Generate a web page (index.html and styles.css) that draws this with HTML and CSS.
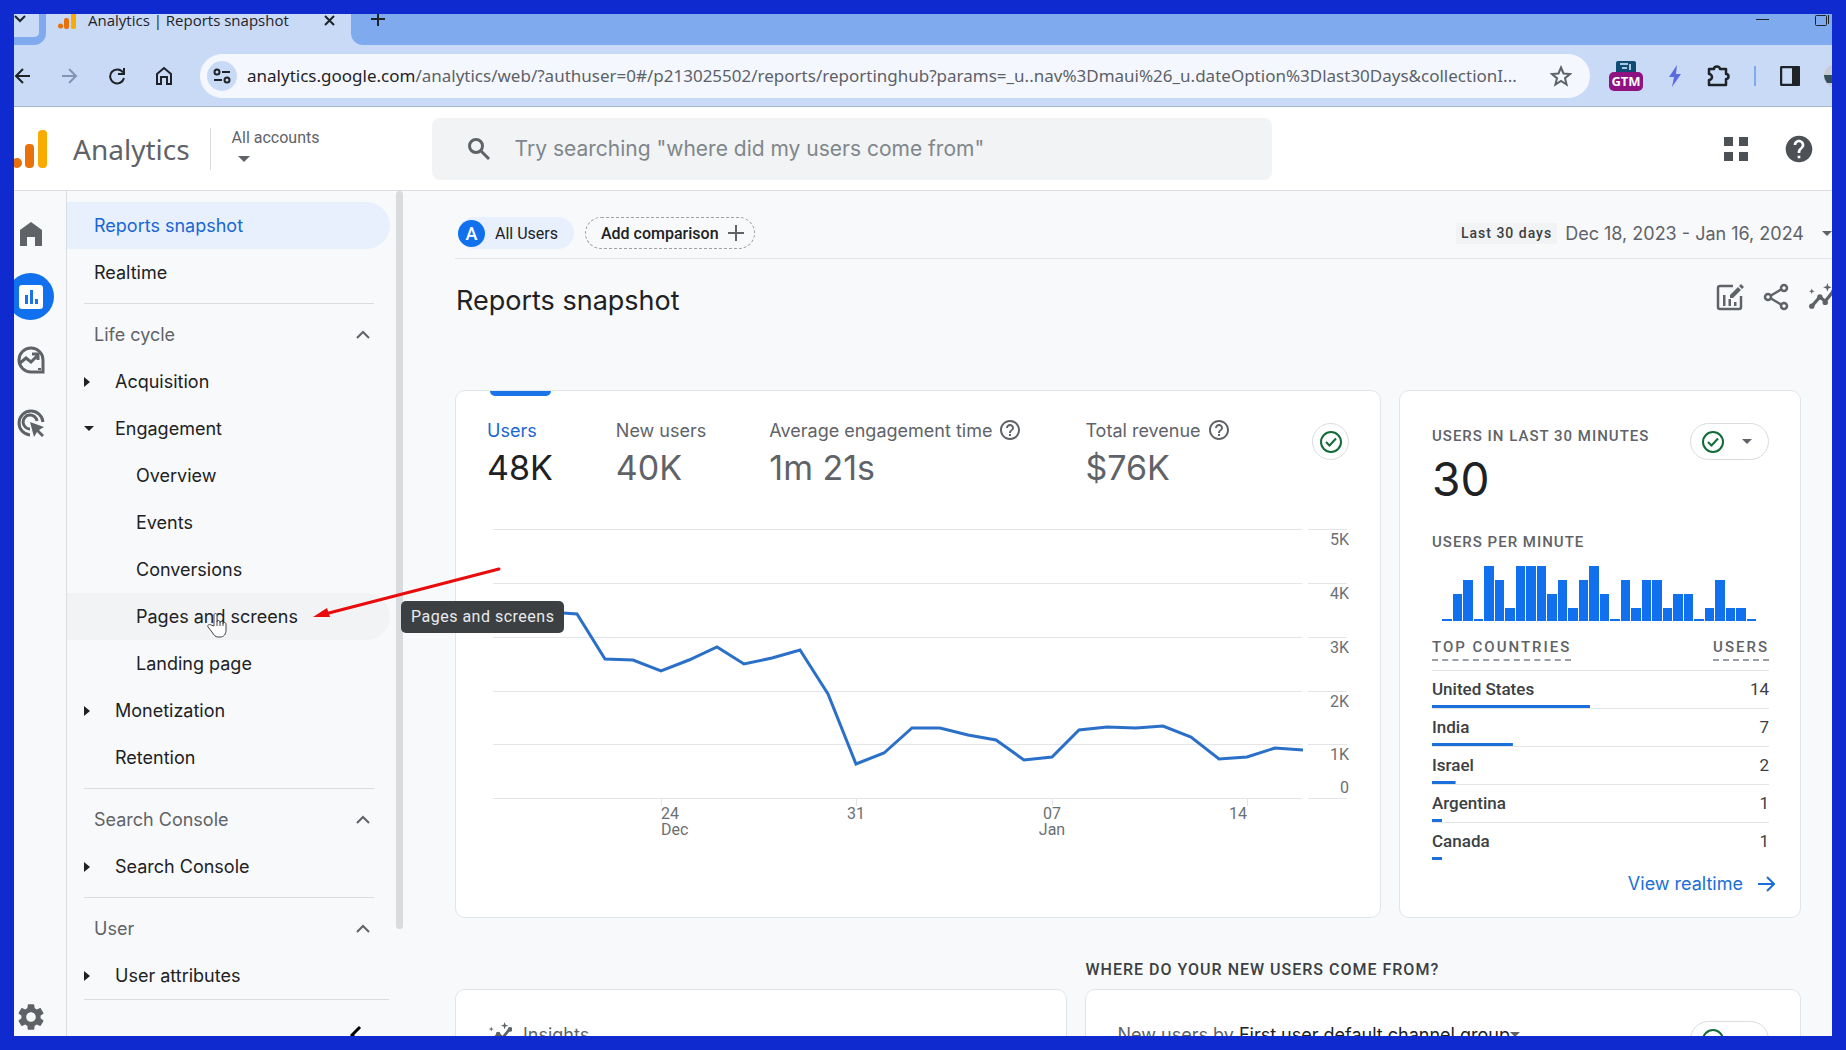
FILE: index.html
```html
<!DOCTYPE html>
<html lang="en">
<head>
  <meta charset="utf-8">
  <title>Analytics | Reports snapshot</title>
  <link rel="stylesheet" href="styles.css">
</head>
<body>
  <svg class="defs" width="0" height="0" aria-hidden="true">
    <symbol id="icon-help" viewBox="0 0 24 24"><path d="M11 18h2v-2h-2v2zm1-16C6.480 2 2 6.480 2 12s4.480 10 10 10 10-4.480 10-10S17.520 2 12 2zm0 18c-4.410 0-8-3.590-8-8s3.590-8 8-8 8 3.590 8 8-3.590 8-8 8zm0-14c-2.210 0-4 1.790-4 4h2c0-1.100.9-2 2-2s2 .9 2 2c0 2-3 1.750-3 5h2c0-2.250 3-2.500 3-5 0-2.210-1.790-4-4-4z"/></symbol>
    <symbol id="icon-check" viewBox="0 0 24 24"><circle cx="12" cy="12" r="10" fill="none" stroke="currentColor" stroke-width="2"/><path d="M7 12l3.500 3.500L17 8.500" fill="none" stroke="currentColor" stroke-width="2"/></symbol>
    <symbol id="icon-up" viewBox="0 0 14 9"><path d="M1 8l6-6 6 6" fill="none" stroke="currentColor" stroke-width="2"/></symbol>
    <symbol id="icon-spark" viewBox="0 0 26 26"><path d="M4 21l7-8 5 4 8-10" fill="none" stroke="currentColor" stroke-width="3"/><circle cx="3.500" cy="21.500" r="2.500"/><circle cx="11" cy="13" r="2.500"/><circle cx="16" cy="18" r="2.500"/><circle cx="24" cy="8" r="2.500"/><path d="M18 0l1 3 3 1-3 1-1 3-1-3-3-1 3-1zM3.500 5l.7 2 2 .7-2 .7-.7 2-.7-2-2-.7 2-.7z"/></symbol>
  </svg>

  <div class="tab-strip">
    <button class="tab-search" aria-label="Search tabs"><svg width="12" height="8" viewBox="0 0 12 8"><path d="M1 1l5 5 5-5" fill="none" stroke="currentColor" stroke-width="2"/></svg></button>
    <div class="tab">
      <svg width="18" height="18" viewBox="0 0 18 18"><circle cx="2.500" cy="15" r="2.500" fill="#e8710a"/><rect x="6" y="7" width="5" height="11" rx="2" fill="#e8710a"/><rect x="13" y="0" width="5" height="18" rx="2" fill="#f9ab00"/></svg>
      <span class="tab-title">Analytics | Reports snapshot</span>
      <button class="tab-close" aria-label="Close tab"><svg width="11" height="11" viewBox="0 0 11 11"><path d="M1 1l9 9M10 1l-9 9" stroke="currentColor" stroke-width="2"/></svg></button>
    </div>
    <button class="new-tab" aria-label="New tab"><svg width="14" height="14" viewBox="0 0 14 14"><path d="M7 0v14M0 7h14" stroke="currentColor" stroke-width="2"/></svg></button>
    <div class="window-buttons">
      <svg width="13" height="12" viewBox="0 0 13 12"><path d="M0 5.500h13" stroke="currentColor"/></svg>
      <svg width="16" height="14" viewBox="0 0 16 14"><rect x="1.500" y="1.500" width="11" height="10" rx="1" fill="none" stroke="currentColor"/><path d="M14.500 1v9" stroke="currentColor"/></svg>
    </div>
  </div>

  <div class="browser-bar">
    <button aria-label="Back"><svg width="18" height="18" viewBox="0 0 18 18"><path d="M16 9H2M9 2L2 9l7 7" fill="none" stroke="currentColor" stroke-width="2"/></svg></button>
    <button class="dim" aria-label="Forward"><svg width="18" height="18" viewBox="0 0 18 18"><path d="M1 9h14M8 2l7 7-7 7" fill="none" stroke="currentColor" stroke-width="2"/></svg></button>
    <button aria-label="Reload"><svg width="18" height="18" viewBox="0 0 18 18"><path d="M15 5.500A7 7 0 1 0 16 11" fill="none" stroke="currentColor" stroke-width="2"/><path d="M17 1v7h-7V6h5V1z"/></svg></button>
    <button aria-label="Home"><svg width="18" height="20" viewBox="0 0 18 20"><path d="M2 8l7-6 7 6v10h-4v-7H6v7H2z" fill="none" stroke="currentColor" stroke-width="2"/></svg></button>
    <div class="url-box">
      <span class="site-info"><svg width="18" height="16" viewBox="0 0 18 16" fill="none" stroke="currentColor" stroke-width="2"><circle cx="4" cy="4" r="2.500"/><path d="M9 4h8M1 12h8"/><circle cx="14" cy="12" r="2.500"/></svg></span>
      <span class="url"><span class="host">analytics.google.com</span>/analytics/web/?authuser=0#/p213025502/reports/reportinghub?params=_u..nav%3Dmaui%26_u.dateOption%3Dlast30Days&amp;collectionI...</span>
      <button aria-label="Bookmark"><svg width="22" height="22" viewBox="0 0 22 22"><path d="M11 2.500l2.500 6 6.500.5-5 4.200 1.600 6.300L11 16l-5.600 3.500L7 13.200 2 9l6.500-.5z" fill="none" stroke="currentColor" stroke-width="2"/></svg></button>
    </div>
    <div class="extensions">
      <svg class="gtm" width="36" height="32" viewBox="0 0 36 32"><rect x="8" y="1" width="20" height="14" rx="2" fill="#0f4c75"/><path d="M12 4h8M14 8h5M22 4v6" stroke="#a8c7e0" stroke-width="2"/><rect x="1" y="12" width="34" height="19" rx="5" fill="#8e1380"/><text x="18" y="26" text-anchor="middle">GTM</text></svg>
      <svg class="bolt" width="14" height="22" viewBox="0 0 14 22"><path d="M9 0L1 12h5l-2 10 9-13H8z" fill="#5b6be0"/></svg>
      <svg width="24" height="24" viewBox="0 0 24 24"><path d="M3 5h5a3 2.500 0 0 1 6 0h6v5a2.500 2.500 0 0 1 0 5v6H3v-5a3 3 0 0 0 0-6z" fill="none" stroke="currentColor" stroke-width="2.500" stroke-linejoin="round"/></svg>
      <span class="bar-divider"></span>
      <svg width="20" height="20" viewBox="0 0 20 20"><rect x="1" y="1" width="18" height="18" rx="1" fill="none" stroke="currentColor" stroke-width="2.500"/><rect x="12" y="1" width="7" height="18"/></svg>
      <svg class="avatar" width="24" height="24" viewBox="0 0 24 24"><circle cx="12" cy="12" r="12" fill="#c8ccd0"/><path d="M0 11h24a12 12 0 0 1-3 8H3a12 12 0 0 1-3-8z" fill="#35505c"/></svg>
    </div>
  </div>

  <header class="app-header">
    <svg class="logo" width="34" height="38" viewBox="0 0 34 38"><circle cx="3" cy="33" r="5" fill="#e8710a"/><rect x="11" y="14" width="9" height="24" rx="4" fill="#e8710a"/><rect x="24" y="0" width="9" height="38" rx="4" fill="#f9ab00"/></svg>
    <span class="product">Analytics</span>
    <button class="account">
      <span>All accounts</span>
      <span class="caret"></span>
    </button>
    <div class="search">
      <svg width="24" height="24" viewBox="0 0 24 24" fill="none" stroke="currentColor" stroke-width="3"><circle cx="9" cy="9" r="6.500"/><path d="M14 14l8 8"/></svg>
      <input type="text" aria-label="Search" placeholder="Try searching &quot;where did my users come from&quot;">
    </div>
    <div class="header-icons">
      <button aria-label="Apps"><svg width="24" height="24" viewBox="0 0 24 24"><path d="M0 0h9v9H0zM15 0h9v9h-9zM0 15h9v9H0zM15 15h9v9h-9z"/></svg></button>
      <button aria-label="Help"><svg width="32" height="32" viewBox="0 0 24 24"><path d="M12 2C6.480 2 2 6.480 2 12s4.480 10 10 10 10-4.480 10-10S17.520 2 12 2zm1 17h-2v-2h2v2zm2.070-7.750l-.9.920C13.450 12.900 13 13.500 13 15h-2v-.5c0-1.100.45-2.100 1.170-2.830l1.240-1.260c.37-.36.590-.86.590-1.410 0-1.100-.9-2-2-2s-2 .9-2 2H8c0-2.210 1.790-4 4-4s4 1.790 4 4c0 .88-.36 1.680-.93 2.250z"/></svg></button>
    </div>
  </header>

  <div class="app">
    <div class="rail">
      <a href="#" aria-label="Home"><svg width="22" height="24" viewBox="0 0 22 24"><path d="M0 24V8l11-8 11 8v16h-7v-9H7v9z"/></svg></a>
      <a href="#" class="current" aria-label="Reports"><svg width="24" height="24" viewBox="0 0 24 24"><rect width="24" height="24" rx="3" fill="#fff"/><path d="M6 10h3v9H6zM11 5h3v14h-3zM16 14h3v5h-3z" fill="#1a73e8"/></svg></a>
      <a href="#" aria-label="Explore"><svg width="28" height="28" viewBox="0 0 28 28" fill="none" stroke="currentColor" stroke-width="3"><path d="M26 26H14A12 12 0 1 1 26 14z"/><path d="M3 17l6-5 5 4 7-7M15 8h6v6"/><path d="M21 23h3" stroke-width="2"/></svg></a>
      <a href="#" aria-label="Advertising"><svg width="28" height="28" viewBox="0 0 28 28"><path d="M13 26A12 12 0 1 1 26 13M13 20A7 7 0 1 1 20 12" fill="none" stroke="currentColor" stroke-width="3"/><path d="M13 13l14 5-5 3 5 5-2 2-5-5-3 5z"/></svg></a>
      <a href="#" class="settings" aria-label="Admin"><svg width="32" height="32" viewBox="0 0 24 24"><path d="M19.140 12.940c.04-.3.060-.61.060-.94 0-.32-.02-.64-.07-.94l2.030-1.580c.18-.14.230-.41.120-.61l-1.920-3.320c-.12-.22-.37-.29-.59-.22l-2.390.96c-.5-.38-1.030-.7-1.620-.94l-.36-2.540c-.04-.24-.24-.41-.48-.41h-3.840c-.24 0-.43.170-.47.410l-.36 2.540c-.59.240-1.130.570-1.620.94l-2.390-.96c-.22-.08-.47 0-.59.220L2.740 8.870c-.12.210-.08.470.12.610l2.030 1.580c-.05.300-.09.630-.09.940s.02.640.07.940l-2.030 1.580c-.18.140-.23.410-.12.610l1.920 3.320c.12.220.37.290.59.220l2.390-.96c.5.380 1.030.7 1.620.94l.36 2.540c.05.240.24.410.48.410h3.840c.24 0 .44-.17.470-.41l.36-2.540c.59-.24 1.130-.56 1.620-.94l2.390.96c.22.080.47 0 .59-.22l1.920-3.320c.12-.22.070-.47-.12-.61l-2.010-1.580zM12 15.600c-1.980 0-3.600-1.620-3.600-3.600s1.620-3.600 3.600-3.600 3.600 1.620 3.600 3.600-1.620 3.600-3.600 3.600z"/></svg></a>
    </div>

    <nav class="side-nav">
      <div class="nav-scroll">
        <a href="#" class="nav-item selected">Reports snapshot</a>
        <a href="#" class="nav-item">Realtime</a>
        <hr>
        <button class="nav-item section">Life cycle <svg width="14" height="9"><use href="#icon-up"/></svg></button>
        <a href="#" class="nav-item parent">Acquisition</a>
        <a href="#" class="nav-item parent open">Engagement</a>
        <a href="#" class="nav-item child">Overview</a>
        <a href="#" class="nav-item child">Events</a>
        <a href="#" class="nav-item child">Conversions</a>
        <a href="#" class="nav-item child hovered">Pages and screens
          <svg class="hand" width="22" height="26" viewBox="0 0 22 26"><path d="M8 14V3c0-2 3-2 3 0v7c0-2 3-2 3 0v1c0-2 3-2 3 0v1c0-2 3-2 3 0v6c0 4-2 7-6 7h-2c-3 0-4-2-6-5l-4-5c-1-2 1-3 3-2z" fill="#fff" stroke="#444"/><path d="M11 10v4M14 11v3M17 12v2" stroke="#444"/></svg>
          <svg class="arrow" width="190" height="56" viewBox="0 0 190 56"><path d="M186 4L12 49" stroke="#e80c0c" stroke-width="3" stroke-linecap="round"/><path d="M0 52l14-9 3 9z" fill="#e80c0c"/></svg>
          <span class="tooltip">Pages and screens</span>
        </a>
        <a href="#" class="nav-item child">Landing page</a>
        <a href="#" class="nav-item parent">Monetization</a>
        <a href="#" class="nav-item leaf">Retention</a>
        <hr>
        <button class="nav-item section">Search Console <svg width="14" height="9"><use href="#icon-up"/></svg></button>
        <a href="#" class="nav-item parent">Search Console</a>
        <hr>
        <button class="nav-item section">User <svg width="14" height="9"><use href="#icon-up"/></svg></button>
        <a href="#" class="nav-item parent">User attributes</a>
      </div>
      <div class="nav-footer">
        <button aria-label="Collapse"><svg width="12" height="20" viewBox="0 0 12 20"><path d="M10 2L2 10l8 8" fill="none" stroke="#000" stroke-width="3"/></svg></button>
      </div>
      <span class="scroll-thumb"></span>
    </nav>

    <main>
      <div class="report-bar">
        <button class="chip"><span class="badge">A</span>All Users</button>
        <button class="add-chip">Add comparison <svg width="16" height="16" viewBox="0 0 16 16"><path d="M8 0v16M0 8h16" stroke="#5f6368" stroke-width="2"/></svg></button>
        <button class="date-range"><span class="range-name">Last 30 days</span><span>Dec 18, 2023 - Jan 16, 2024</span><span class="caret"></span></button>
      </div>

      <div class="title-row">
        <h1>Reports snapshot</h1>
        <div class="title-icons">
          <button aria-label="Customize report"><svg width="28" height="28" viewBox="0 0 28 28"><path d="M17 3H4a2 2 0 0 0-2 2v19a2 2 0 0 0 2 2h19a2 2 0 0 0 2-2V13" fill="none" stroke="currentColor" stroke-width="2.500"/><path d="M7 12h2.500v11H7zM12.500 16H15v7h-2.500zM18 19h2.500v4H18zM14 12l8-8 3 3-8 8h-3zM23 3l2-2 3 3-2 2z"/></svg></button>
          <button aria-label="Share"><svg width="26" height="28" viewBox="0 0 26 28" fill="none" stroke="currentColor" stroke-width="2.500"><circle cx="5" cy="14" r="3"/><circle cx="21" cy="5" r="3"/><circle cx="21" cy="23" r="3"/><path d="M8 12.500L18 6.500M8 15.500l10 6"/></svg></button>
          <button aria-label="Insights"><svg width="28" height="28"><use href="#icon-spark"/></svg></button>
        </div>
      </div>

      <div class="cards">
        <section class="card overview">
          <div class="metrics">
            <button class="metric active"><span>Users</span><strong>48K</strong></button>
            <button class="metric"><span>New users</span><strong>40K</strong></button>
            <button class="metric"><span>Average engagement time <svg width="24" height="24"><use href="#icon-help"/></svg></span><strong>1m 21s</strong></button>
            <button class="metric"><span>Total revenue <svg width="24" height="24"><use href="#icon-help"/></svg></span><strong>$76K</strong></button>
            <button class="status round" aria-label="Data quality"><svg width="24" height="24"><use href="#icon-check"/></svg></button>
          </div>
          <svg class="line-chart" viewBox="0 0 862 330">
            <g stroke="#e3e5e8">
              <path d="M6 9.500h809M821 9.500h39M6 63.500h809M821 63.500h39M6 117.500h809M821 117.500h39M6 171.500h809M821 171.500h39M6 224.500h809M821 224.500h39M6 278.500h809M821 278.500h39"/>
              <path d="M174.500 278v8M369.500 278v8M565.500 278v8M760.500 278v8"/>
            </g>
            <polyline points="6,96 34,94 62,92 90,94 118,139 146,140 174,151 202,140 230,127 257,144 285,138 313,130 341,174 369,244 397,233 425,208 453,208 481,215 509,220 537,240 565,237 592,210 620,207 649,208 676,206 704,217 732,239 760,237 788,228 816,230" fill="none" stroke="#2a70c8" stroke-width="3"/>
            <g text-anchor="end">
              <text x="862" y="25">5K</text>
              <text x="862" y="79">4K</text>
              <text x="862" y="133">3K</text>
              <text x="862" y="187">2K</text>
              <text x="862" y="240">1K</text>
              <text x="862" y="273">0</text>
              <text x="760" y="299">14</text>
            </g>
            <text x="174" y="299">24</text>
            <text x="174" y="315">Dec</text>
            <g text-anchor="middle">
              <text x="369" y="299">31</text>
              <text x="565" y="299">07</text>
              <text x="565" y="315">Jan</text>
            </g>
          </svg>
        </section>

        <section class="card realtime">
          <div class="realtime-head">
            <h2>Users in last 30 minutes</h2>
            <button class="status" aria-label="Data quality"><svg width="24" height="24"><use href="#icon-check"/></svg><span class="caret"></span></button>
          </div>
          <div class="big-number">30</div>
          <h2>Users per minute</h2>
          <div class="bars">
            <i></i><i class="b2"></i><i class="b3"></i><i></i><i class="b4"></i><i class="b3"></i><i class="b1"></i><i class="b4"></i><i class="b4"></i><i class="b4"></i>
            <i class="b2"></i><i class="b3"></i><i class="b1"></i><i class="b3"></i><i class="b4"></i><i class="b2"></i><i></i><i class="b3"></i><i class="b1"></i><i class="b3"></i>
            <i class="b3"></i><i class="b1"></i><i class="b2"></i><i class="b2"></i><i></i><i class="b1"></i><i class="b3"></i><i class="b1"></i><i class="b1"></i><i></i>
          </div>
          <table>
            <thead>
              <tr><th><span>Top countries</span></th><th><span>Users</span></th></tr>
            </thead>
            <tbody>
              <tr style="--share: 47%"><td>United States</td><td>14</td></tr>
              <tr style="--share: 24%"><td>India</td><td>7</td></tr>
              <tr style="--share: 7%"><td>Israel</td><td>2</td></tr>
              <tr style="--share: 3%"><td>Argentina</td><td>1</td></tr>
              <tr style="--share: 3%"><td>Canada</td><td>1</td></tr>
            </tbody>
          </table>
          <a href="#" class="view-link">View realtime <svg width="17" height="16" viewBox="0 0 17 16"><path d="M0 8h15M9 1l7 7-7 7" fill="none" stroke="currentColor" stroke-width="2"/></svg></a>
        </section>
      </div>

      <div class="cards second">
        <section class="card insights">
          <h3><svg width="24" height="24"><use href="#icon-spark"/></svg>Insights</h3>
        </section>
        <div class="acquisition">
          <h2>Where do your new users come from?</h2>
          <section class="card">
            <h3>New users by&nbsp;<b>First user default channel group</b><span class="caret"></span></h3>
            <button class="status" aria-label="Data quality"><svg width="24" height="24"><use href="#icon-check"/></svg><span class="caret"></span></button>
          </section>
        </div>
      </div>
    </main>
  </div>
</body>
</html>
```

FILE: styles.css
```css
* {
  box-sizing: border-box;
}

body {
  margin: 0;
  height: 100vh;
  border: 14px solid #0f2bd0;
  display: flex;
  flex-direction: column;
  overflow: hidden;
  background: #f8f9fb;
  color: #202124;
  font-family: Roboto, sans-serif;
  font-size: 18px;
}

button {
  border: 0;
  padding: 0;
  background: none;
  color: inherit;
  font: inherit;
  display: flex;
  align-items: center;
}

a {
  color: inherit;
  text-decoration: none;
}

svg {
  fill: currentColor;
  flex-shrink: 0;
}

svg[fill="none"] {
  fill: none;
}

h1, h2, h3 {
  margin: 0;
  font-weight: 400;
}

.defs {
  position: absolute;
}

.caret {
  border: 5px solid transparent;
  border-top-color: #5f6368;
  border-bottom: 0;
}

/* browser window */

.tab-strip {
  height: 31px;
  flex-shrink: 0;
  display: flex;
  background: #c9daf7;
  color: #1f2328;
}

.tab-search {
  width: 32px;
  height: 31px;
  padding-bottom: 21px;
  background: #c9daf7;
  border: solid #80aaee;
  border-width: 0 7px 8px 0;
  border-radius: 0 0 12px 0;
  padding-bottom: 13px;
  flex-shrink: 0;
}

.tab {
  width: 305px;
  padding: 0 16px 19px 12px;
  display: flex;
  align-items: center;
  gap: 12px;
  font-family: "Open Sans", sans-serif;
  font-size: 15px;
}

.tab-title {
  flex: 1;
  white-space: nowrap;
}

.new-tab {
  padding: 0 20px 21px;
  flex: 1;
  background: #80aaee;
  border-bottom-left-radius: 12px;
}

.window-buttons {
  display: flex;
  align-items: flex-start;
  gap: 45px;
  padding: 0 2px;
  background: #80aaee;
}

.browser-bar {
  height: 62px;
  flex-shrink: 0;
  display: flex;
  align-items: center;
  gap: 29px;
  background: #c9daf7;
  border-bottom: 1px solid #a4b5d0;
  color: #1f2328;
}

.browser-bar .dim {
  color: #8394b2;
}

.url-box {
  flex: 1;
  min-width: 0;
  height: 44px;
  margin-left: -2px;
  padding: 0 18px 0 7px;
  display: flex;
  align-items: center;
  gap: 10px;
  background: #f4f8fe;
  border-radius: 22px;
  font-family: "Noto Sans", sans-serif;
  font-size: 17px;
  color: #5d6168;
}

.site-info {
  width: 30px;
  height: 30px;
  display: flex;
  align-items: center;
  justify-content: center;
  flex-shrink: 0;
  border-radius: 50%;
  background: #c9daf7;
  color: #1f2328;
}

.url {
  flex: 1;
  white-space: nowrap;
  overflow: hidden;
}

.host {
  color: #1f2328;
}

.extensions {
  display: flex;
  align-items: center;
  gap: 24px;
  margin: 0 -16px 0 -11px;
}

.gtm text {
  font: bold 13px "Noto Sans", sans-serif;
  fill: #fff;
}

.bar-divider {
  width: 2px;
  height: 20px;
  background: #80aaee;
}

/* app header */

.app-header {
  height: 84px;
  flex-shrink: 0;
  display: flex;
  align-items: center;
  background: #fff;
  border-bottom: 1px solid #dadce0;
  color: #5f6368;
}

.product {
  margin: 0 20px 0 25px;
  font-family: "Noto Sans", sans-serif;
  font-size: 28px;
}

.account {
  width: 222px;
  height: 42px;
  padding-left: 21px;
  border-left: 1px solid #dadce0;
  flex-direction: column;
  align-items: flex-start;
  justify-content: space-between;
  font-size: 16px;
}

.account .caret {
  margin: 0 0 8px 6px;
  border-width: 6px 6px 0;
}

.search {
  flex: 1;
  max-width: 840px;
  height: 62px;
  padding: 0 35px;
  display: flex;
  align-items: center;
  gap: 24px;
  background: #f1f3f4;
  border-radius: 8px;
}

.search input {
  flex: 1;
  border: 0;
  padding: 0;
  background: none;
  font: 21px Inter, sans-serif;
}

.search input::placeholder {
  color: #80868b;
}

.header-icons {
  margin: 0 17px 0 auto;
  display: flex;
  align-items: center;
  gap: 35px;
  color: #4d5156;
}

/* navigation */

.app {
  flex: 1;
  min-height: 0;
  display: flex;
  overflow: hidden;
}

.rail {
  width: 53px;
  flex-shrink: 0;
  padding: 19px 0 3px;
  display: flex;
  flex-direction: column;
  gap: 16px;
  border-right: 1px solid #dadce0;
  color: #5f6368;
}

.rail a {
  width: 47px;
  height: 47px;
  margin-left: -7px;
  display: flex;
  align-items: center;
  justify-content: center;
  border-radius: 50%;
}

.rail .current {
  background: #1070ee;
}

.rail .settings {
  margin-top: auto;
  height: 32px;
}

.side-nav {
  position: relative;
  width: 337px;
  flex-shrink: 0;
  padding-top: 11px;
  display: flex;
  flex-direction: column;
  font-family: Inter, sans-serif;
}

.side-nav hr {
  margin: 7px 30px 7px 17px;
  border: 0;
  border-top: 1px solid #dadce0;
}

.nav-item {
  position: relative;
  width: 323px;
  height: 47px;
  padding: 0 20px 0 27px;
  display: flex;
  align-items: center;
}

.nav-item.selected {
  background: #e8f0fe;
  border-radius: 0 24px 24px 0;
  color: #1967d2;
}

.nav-item.hovered {
  background: #f1f3f4;
  border-radius: 0 24px 24px 0;
}

.nav-item.section {
  justify-content: space-between;
  color: #5f6368;
}

.nav-item.parent {
  padding-left: 17px;
}

.nav-item.parent::before {
  content: "";
  width: 0;
  margin-right: 25px;
  border: 5px solid transparent;
  border-left: 6px solid #202124;
  border-right: 0;
}

.nav-item.parent.open::before {
  margin-right: 21px;
  border: 5px solid transparent;
  border-top: 5px solid #202124;
  border-bottom: 0;
}

.nav-item.leaf {
  padding-left: 48px;
}

.nav-item.child {
  padding-left: 69px;
}

.hand {
  position: absolute;
  left: 139px;
  top: 19px;
}

.arrow {
  position: absolute;
  left: 246px;
  top: -28px;
  z-index: 2;
}

.tooltip {
  position: absolute;
  left: 334px;
  top: 8px;
  z-index: 1;
  height: 32px;
  padding: 0 10px;
  border-radius: 5px;
  background: #3c4043;
  color: #e8eaed;
  font: 16px/32px Roboto, sans-serif;
  letter-spacing: 0.5px;
  white-space: nowrap;
}

.nav-footer {
  margin: 0 15px 0 17px;
  padding: 25px 27px 0;
  display: flex;
  justify-content: flex-end;
  border-top: 1px solid #dadce0;
}

.scroll-thumb {
  position: absolute;
  right: 1px;
  top: 0;
  width: 7px;
  height: 738px;
  border-radius: 4px;
  background: #d9dbdf;
}

/* report */

main {
  flex: 1;
  min-width: 0;
  padding-left: 51px;
  overflow: hidden;
}

.report-bar {
  height: 68px;
  padding: 17px 0 0 3px;
  display: flex;
  align-items: center;
  gap: 11px;
  border-bottom: 1px solid #e3e5e8;
}

.chip {
  height: 32px;
  padding-right: 16px;
  gap: 10px;
  border-radius: 16px;
  background: #e8f0fe;
  font-size: 16px;
}

.badge {
  width: 27px;
  height: 27px;
  border-radius: 50%;
  background: #1070ee;
  color: #fff;
  font-size: 18px;
  font-weight: 500;
  line-height: 27px;
  text-align: center;
}

.add-chip {
  height: 32px;
  padding: 0 10px 0 15px;
  gap: 9px;
  border: 1px dashed #9aa0a6;
  border-radius: 16px;
  font-size: 16px;
  font-weight: 500;
}

.date-range {
  margin-left: auto;
  gap: 8px;
  color: #5f6368;
  font-family: Inter, sans-serif;
  white-space: nowrap;
}

.date-range .caret {
  margin-left: 10px;
}

.range-name {
  padding: 0 5px;
  background: #f1f3f4;
  color: #3c4043;
  font: 500 14px/21px Roboto, sans-serif;
  letter-spacing: 1px;
}

.title-row {
  height: 131px;
  padding: 24px 0 0 1px;
  display: flex;
  justify-content: space-between;
}

h1 {
  font-family: Inter, sans-serif;
  font-size: 27px;
  line-height: 36px;
}

.title-icons {
  height: 28px;
  margin-right: -4px;
  display: flex;
  gap: 19px;
  color: #5f6368;
}

.cards {
  margin-right: 31px;
  display: grid;
  grid-template-columns: minmax(0, 926fr) minmax(0, 402fr);
  gap: 18px;
}

.card {
  background: #fff;
  border: 1px solid #e1e4e8;
  border-radius: 10px;
}

.overview {
  height: 528px;
  padding: 0 31px;
}

.metrics {
  display: flex;
  align-items: flex-start;
}

.metric {
  position: relative;
  margin-right: 63px;
  padding-top: 27px;
  flex-direction: column;
  align-items: flex-start;
  color: #5f6368;
  font-family: Inter, sans-serif;
  white-space: nowrap;
}

.metric span {
  height: 24px;
  display: flex;
  align-items: center;
  gap: 6px;
}

.metric strong {
  font-size: 34px;
  font-weight: 400;
  line-height: 51px;
}

.metric.active span {
  color: #1967d2;
}

.metric.active strong {
  color: #202124;
}

.metric.active::before {
  content: "";
  position: absolute;
  left: 3px;
  top: 0;
  width: 61px;
  height: 5px;
  border-radius: 0 0 5px 5px;
  background: #1a73e8;
}

.status {
  width: 79px;
  height: 37px;
  padding: 0 16px 0 10px;
  justify-content: space-between;
  flex-shrink: 0;
  border: 1px solid #dadce0;
  border-radius: 19px;
  color: #136c37;
}

.status.round {
  width: 37px;
  margin: 32px 0 0 auto;
  padding: 0;
  justify-content: center;
}

.line-chart {
  display: block;
  width: 100%;
  margin-top: 27px;
}

.line-chart text {
  font-size: 16px;
  fill: #6b6f74;
}

h2 {
  color: #5f6368;
  font-size: 15px;
  font-weight: 500;
  line-height: 20px;
  letter-spacing: 1px;
  text-transform: uppercase;
}

.realtime {
  height: 528px;
  padding: 32px 31px 0 32px;
}

.realtime-head {
  height: 26px;
  display: flex;
  justify-content: space-between;
}

.realtime-head h2 {
  margin-top: 3px;
}

.big-number {
  margin-bottom: 23px;
  font: 46px/60px Inter, sans-serif;
}

.bars {
  height: 55px;
  margin: 14px 13px 0 10px;
  display: flex;
  align-items: flex-end;
  gap: 1px;
}

.bars i {
  flex: 1;
  height: 2px;
  background: #1070ee;
}

.bars .b1 {
  height: 13px;
}

.bars .b2 {
  height: 27px;
}

.bars .b3 {
  height: 41px;
}

.bars .b4 {
  height: 55px;
}

table {
  width: 100%;
  margin-top: 12px;
  border-collapse: collapse;
  font-size: 17px;
}

th {
  height: 37px;
  padding: 0 0 8px;
  color: #5f6368;
  font-size: 15px;
  font-weight: 500;
  letter-spacing: 2px;
  text-align: left;
  text-transform: uppercase;
}

th span {
  padding-bottom: 3px;
  border-bottom: 2px dashed #9aa0a6;
}

tbody tr {
  background: linear-gradient(#1a6fd8, #1a6fd8) left bottom / var(--share) 3px no-repeat;
}

tbody td {
  height: 38px;
  padding: 0;
  border-top: 1px solid #e3e5e8;
  color: #3c4043;
  font-weight: 500;
}

th:last-child,
td:last-child {
  text-align: right;
}

td:last-child {
  font-weight: 400;
}

.view-link {
  margin: 13px -6px 0 0;
  display: flex;
  align-items: center;
  justify-content: flex-end;
  gap: 15px;
  color: #1a6fd8;
  font-family: Inter, sans-serif;
}

.second {
  grid-template-columns: minmax(0, 612fr) minmax(0, 717fr);
  align-items: start;
  padding-top: 42px;
}

.second .card {
  height: 200px;
  padding: 31px 31px 0 32px;
  display: flex;
  justify-content: space-between;
}

.second .insights {
  margin-top: 29px;
}

.acquisition h2 {
  margin: 0 0 9px 1px;
  color: #3c4043;
  font-size: 16px;
}

h3 {
  height: 26px;
  display: flex;
  align-items: center;
  gap: 11px;
  color: #5f6368;
  font-family: Inter, sans-serif;
  font-size: 18px;
}

.acquisition h3 {
  gap: 0;
}

h3 b {
  color: #202124;
  font-weight: 400;
}
```
